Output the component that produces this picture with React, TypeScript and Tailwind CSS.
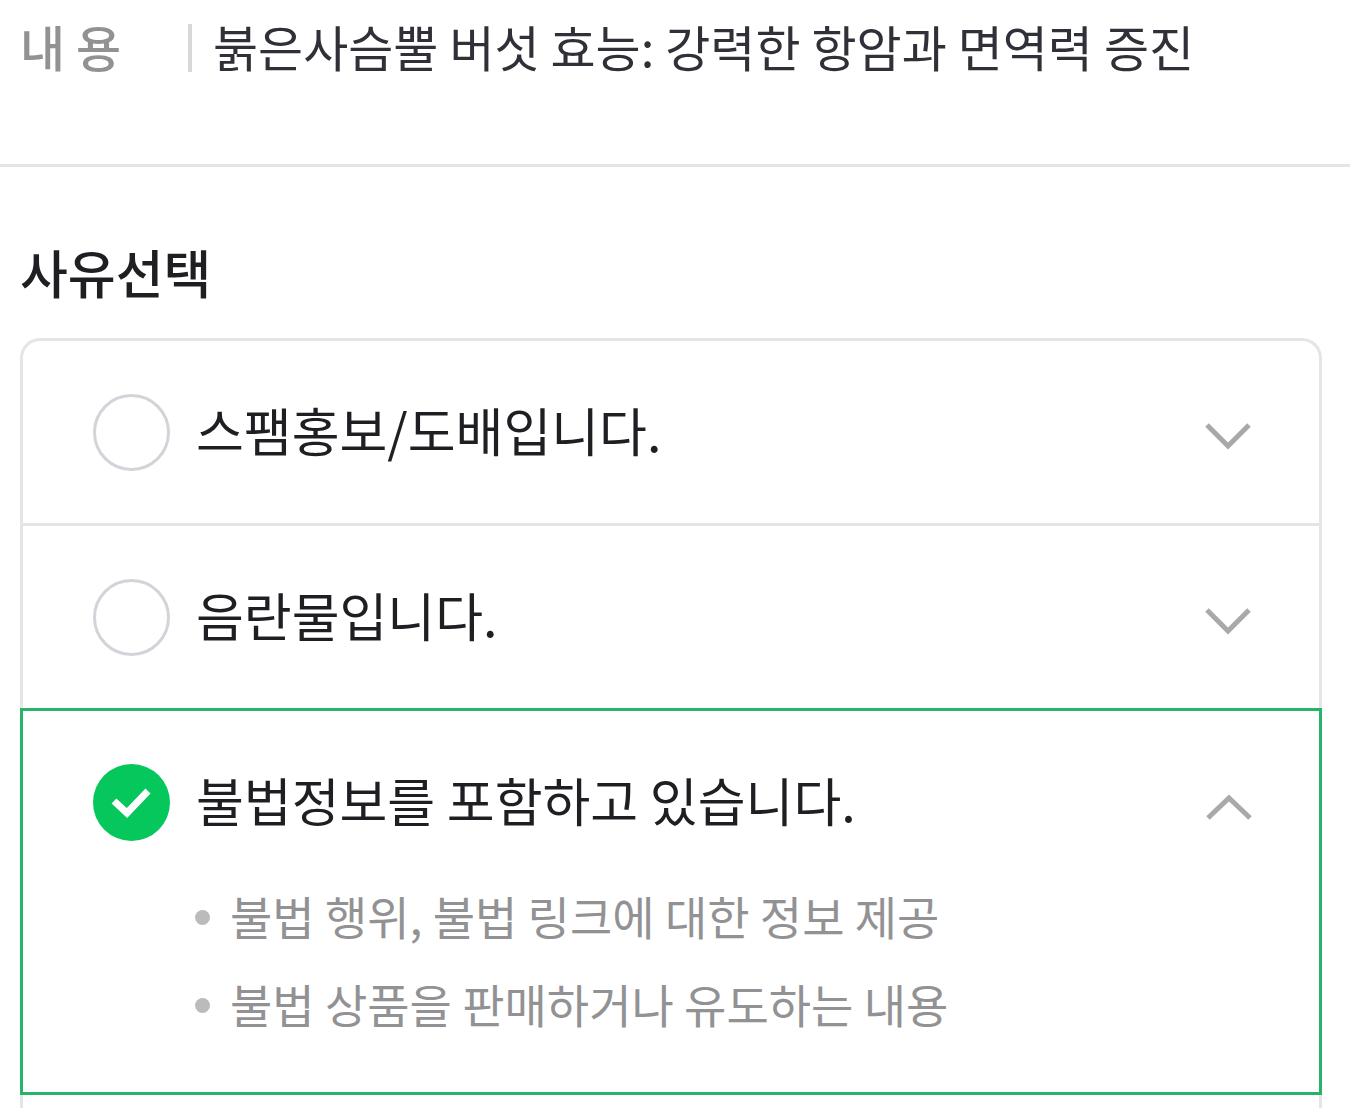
const reasons = [
    { id: "spam", label: "스팸홍보/도배입니다.", details: [] },
    { id: "adult", label: "음란물입니다.", details: [] },
    {
        id: "illegal",
        label: "불법정보를 포함하고 있습니다.",
        details: ["불법 행위, 불법 링크에 대한 정보 제공", "불법 상품을 판매하거나 유도하는 내용"],
    },
];

function Chevron({ open }: { open: boolean }) {
    return (
        <svg viewBox="0 0 48 30" className="w-12 h-[30px]" fill="none" stroke="#a9a9a9" strokeWidth="5">
            <path d={open ? "M4 27 25 7 46 27" : "M3 4 24 25 45 4"} />
        </svg>
    );
}

export default function App() {
    return (
        <div className="bg-white text-[#1e1e23] overflow-hidden font-['Noto_Sans_CJK_KR',sans-serif]">
            <div className="flex items-center h-[167px] pb-[68px] pl-5 border-b-3 border-[#e5e5e8]">
                <span className="w-[168px] pb-1 text-[49px] font-medium text-[#929294]">내 용</span>
                <span className="w-1 h-12 bg-[#d8d8d8]" />
                <p className="pb-1 pl-[21px] text-[49px] text-[#303038] whitespace-nowrap">붉은사슴뿔 버섯 효능: 강력한 항암과 면역력 증진</p>
            </div>

            <h2 className="pt-[67px] px-5 text-[52px] leading-[76px] font-medium">사유선택</h2>

            <ul className="mt-7 ml-5 mr-7">
                {reasons.map((reason) => {
                    const open = reason.details.length > 0;
                    return (
                        <li
                            key={reason.id}
                            className={open ? "border-3 border-[#27b36a] pb-[43px]" : "border-3 border-b-0 border-[#e5e5e8] first:rounded-t-[20px]"}
                        >
                            <div className="flex items-center h-[182px] pl-[70px] pr-[67px]">
                                <label className="flex flex-1 items-center gap-[26px] text-[52px]">
                                    <span className="relative flex">
                                        <input
                                            type="radio"
                                            name="reason"
                                            defaultChecked={open}
                                            className="peer size-[77px] appearance-none rounded-full border-3 border-[#d3d3d9] checked:border-0 checked:bg-[#06c75b]"
                                        />
                                        <svg viewBox="0 0 77 77" className="absolute inset-0 hidden peer-checked:block" fill="none" stroke="#fff" strokeWidth="7">
                                            <path d="M21 37 34 49 55 27" />
                                        </svg>
                                    </span>
                                    <span className="pb-1">{reason.label}</span>
                                </label>
                                <button type="button" className="pt-2" aria-label={open ? "접기" : "펼치기"}>
                                    <Chevron open={open} />
                                </button>
                            </div>
                            {open && (
                                <ul className="text-[46px] leading-[84px] text-[#929294] pl-[172px] -mt-5">
                                    {reason.details.map((detail) => (
                                        <li key={detail} className="flex items-center gap-5">
                                            <span className="size-[15px] rounded-full bg-[#bbbbbb]" />
                                            <span className="pb-1">{detail}</span>
                                        </li>
                                    ))}
                                </ul>
                            )}
                        </li>
                    );
                })}
            </ul>
            <div className="ml-5 mr-7 h-[13px] border-x-3 border-[#e5e5e8]" />
        </div>
    );
}
